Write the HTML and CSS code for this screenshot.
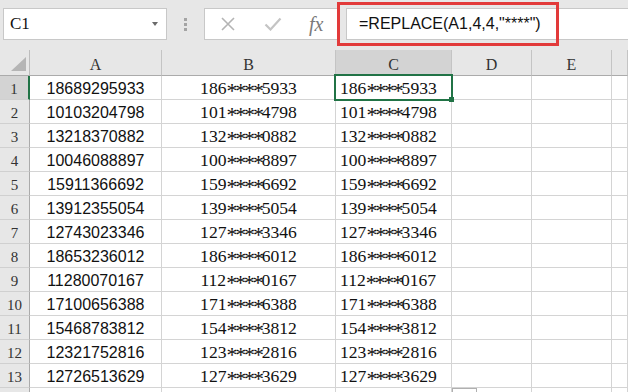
FILE: index.html
```html
<!DOCTYPE html>
<html lang="zh-CN">
<head>
    <meta charset="UTF-8">
    <title>REPLACE</title>
    <link rel="stylesheet" href="styles.css">
</head>
<body>
    <div class="formula-row">
        <div class="name-box">
            <span>C1</span>
            <span class="caret"></span>
        </div>
        <div class="grip"><i></i><i></i><i></i></div>
        <div class="fx-buttons">
            <svg class="btn-x" width="16" height="16" viewBox="0 0 16 16">
                <path d="M2 2 L14 14 M14 2 L2 14" stroke="#b4b4b4" stroke-width="1.6" fill="none"/>
            </svg>
            <svg class="btn-ok" width="18" height="14" viewBox="0 0 18 14">
                <path d="M1.5 7.5 L6.5 12.5 L16.5 1.5" stroke="#c4c4c4" stroke-width="2.2" fill="none"/>
            </svg>
            <span class="fx">fx</span>
        </div>
        <div class="formula-input">=REPLACE(A1,4,4,"****")</div>
        <!-- red mark drawn over the formula -->
        <div class="highlight"></div>
    </div>

    <div class="sheet">
        <div class="corner"><span class="tri"></span></div>
        <div class="col-head">A</div>
        <div class="col-head">B</div>
        <div class="col-head active">C</div>
        <div class="col-head">D</div>
        <div class="col-head">E</div>
        <div class="col-head"></div>

        <div class="row-head active">1</div>
        <div class="cell num">18689295933</div>
        <div class="cell mid">186<span class="mask">****</span>5933</div>
        <div class="cell left selected">186<span class="mask">****</span>5933<span class="sel"></span><span class="handle"></span></div>
        <div class="cell"></div><div class="cell"></div><div class="cell"></div>

        <div class="row-head">2</div>
        <div class="cell num">10103204798</div>
        <div class="cell mid">101<span class="mask">****</span>4798</div>
        <div class="cell left">101<span class="mask">****</span>4798</div>
        <div class="cell"></div><div class="cell"></div><div class="cell"></div>

        <div class="row-head">3</div>
        <div class="cell num">13218370882</div>
        <div class="cell mid">132<span class="mask">****</span>0882</div>
        <div class="cell left">132<span class="mask">****</span>0882</div>
        <div class="cell"></div><div class="cell"></div><div class="cell"></div>

        <div class="row-head">4</div>
        <div class="cell num">10046088897</div>
        <div class="cell mid">100<span class="mask">****</span>8897</div>
        <div class="cell left">100<span class="mask">****</span>8897</div>
        <div class="cell"></div><div class="cell"></div><div class="cell"></div>

        <div class="row-head">5</div>
        <div class="cell num">15911366692</div>
        <div class="cell mid">159<span class="mask">****</span>6692</div>
        <div class="cell left">159<span class="mask">****</span>6692</div>
        <div class="cell"></div><div class="cell"></div><div class="cell"></div>

        <div class="row-head">6</div>
        <div class="cell num">13912355054</div>
        <div class="cell mid">139<span class="mask">****</span>5054</div>
        <div class="cell left">139<span class="mask">****</span>5054</div>
        <div class="cell"></div><div class="cell"></div><div class="cell"></div>

        <div class="row-head">7</div>
        <div class="cell num">12743023346</div>
        <div class="cell mid">127<span class="mask">****</span>3346</div>
        <div class="cell left">127<span class="mask">****</span>3346</div>
        <div class="cell"></div><div class="cell"></div><div class="cell"></div>

        <div class="row-head">8</div>
        <div class="cell num">18653236012</div>
        <div class="cell mid">186<span class="mask">****</span>6012</div>
        <div class="cell left">186<span class="mask">****</span>6012</div>
        <div class="cell"></div><div class="cell"></div><div class="cell"></div>

        <div class="row-head">9</div>
        <div class="cell num">11280070167</div>
        <div class="cell mid">112<span class="mask">****</span>0167</div>
        <div class="cell left">112<span class="mask">****</span>0167</div>
        <div class="cell"></div><div class="cell"></div><div class="cell"></div>

        <div class="row-head">10</div>
        <div class="cell num">17100656388</div>
        <div class="cell mid">171<span class="mask">****</span>6388</div>
        <div class="cell left">171<span class="mask">****</span>6388</div>
        <div class="cell"></div><div class="cell"></div><div class="cell"></div>

        <div class="row-head">11</div>
        <div class="cell num">15468783812</div>
        <div class="cell mid">154<span class="mask">****</span>3812</div>
        <div class="cell left">154<span class="mask">****</span>3812</div>
        <div class="cell"></div><div class="cell"></div><div class="cell"></div>

        <div class="row-head">12</div>
        <div class="cell num">12321752816</div>
        <div class="cell mid">123<span class="mask">****</span>2816</div>
        <div class="cell left">123<span class="mask">****</span>2816</div>
        <div class="cell"></div><div class="cell"></div><div class="cell"></div>

        <div class="row-head">13</div>
        <div class="cell num">12726513629</div>
        <div class="cell mid">127<span class="mask">****</span>3629</div>
        <div class="cell left">127<span class="mask">****</span>3629</div>
        <div class="cell"></div><div class="cell"></div><div class="cell"></div>

        <!-- row 14, only its top edge is in view -->
        <div class="row-head"></div>
        <div class="cell"></div><div class="cell"></div><div class="cell"></div>
        <div class="cell"></div><div class="cell"></div><div class="cell"></div>
    </div>

    <!-- quick analysis button peeking in at the bottom -->
    <div class="quick-box"></div>
</body>
</html>
```

FILE: styles.css
```css
* {
    margin: 0;
    padding: 0;
    box-sizing: border-box;
}

body {
    width: 628px;
    height: 392px;
    overflow: hidden;
    position: relative;
    background: #fff;
    color: #111;
}

/* formula bar */
.formula-row {
    position: relative;
    height: 50px;
    display: flex;
    align-items: flex-start;
    padding: 8px 0 0 3px;
    background: #e7e7e7;
}

.name-box {
    width: 164px;
    height: 32px;
    display: flex;
    align-items: center;
    justify-content: space-between;
    padding: 0 8px 0 6px;
    background: #fff;
    border: 1px solid #c8c8c8;
    font-family: "Liberation Serif", serif;
    font-size: 17px;
}

.caret {
    width: 0;
    height: 0;
    border-left: 3px solid transparent;
    border-right: 3px solid transparent;
    border-top: 4px solid #6a6a6a;
}

.grip {
    width: 37px;
    height: 32px;
    display: flex;
    flex-direction: column;
    align-items: center;
    justify-content: center;
    gap: 2px;
}

.grip i {
    display: block;
    width: 3px;
    height: 3px;
    background: #a4a4a4;
}

.fx-buttons {
    width: 136px;
    height: 32px;
    display: flex;
    align-items: center;
    gap: 28px;
    padding-left: 15px;
    background: #fff;
    border: 1px solid #c8c8c8;
    border-right: none;
}

.fx {
    margin-left: -1px;
    font-family: "Liberation Serif", serif;
    font-style: italic;
    font-size: 20px;
    color: #7a7a7a;
}

.formula-input {
    flex: 1;
    height: 32px;
    margin-left: 6px;
    padding-left: 12px;
    background: #fff;
    border: 1px solid #c8c8c8;
    border-right: none;
    font-family: "Liberation Sans", Arial, sans-serif;
    font-size: 16px;
    line-height: 30px;
}

.highlight {
    position: absolute;
    left: 337px;
    top: 2px;
    width: 222px;
    height: 44px;
    border: 3px solid #e23a3a;
}

/* grid */
.sheet {
    display: grid;
    grid-template-columns: 30px 132px 174px 116px 80px 80px 1fr;
    grid-template-rows: 26px;
    grid-auto-rows: 24px;
}

.corner,
.col-head,
.row-head {
    background: #e7e7e7;
    font-family: "Liberation Serif", serif;
    color: #333;
    text-align: center;
}

.corner {
    position: relative;
    border-right: 1px solid #bdbdbd;
    border-bottom: 1px solid #ababab;
}

.tri {
    position: absolute;
    right: 3px;
    bottom: 4px;
    width: 0;
    height: 0;
    border-left: 15px solid transparent;
    border-bottom: 14px solid #b5b5b5;
}

.col-head {
    font-size: 16px;
    line-height: 20px;
    padding-top: 5px;
    border-right: 1px solid #c4c4c4;
    border-bottom: 1px solid #ababab;
}

.col-head.active {
    background: #d3d3d3;
    border-bottom: 2px solid #217346;
}

.row-head {
    font-size: 15px;
    line-height: 21px;
    padding-top: 3px;
    border-right: 1px solid #ababab;
    border-bottom: 1px solid #d0d0d0;
}

.row-head.active {
    background: #d3d3d3;
    border-right: 2px solid #217346;
}

.cell {
    line-height: 21px;
    padding-top: 2px;
    border-right: 1px solid #d4d4d4;
    border-bottom: 1px solid #d4d4d4;
    white-space: nowrap;
}

.num {
    font-family: "Liberation Sans", Arial, sans-serif;
    font-size: 16px;
    text-align: center;
}

.mid,
.left {
    font-family: "Liberation Serif", serif;
    font-size: 17.6px;
}

.mid {
    text-align: center;
}

.left {
    padding-left: 4px;
}

/* the masked digits sit lower and larger, like the CJK asterisk */
.mask {
    font-size: 22px;
    letter-spacing: -2.2px;
    vertical-align: -4px;
}

.selected {
    position: relative;
}

.sel {
    position: absolute;
    left: -2px;
    top: -2px;
    width: 119px;
    height: 27px;
    border: 2px solid #217346;
}

.handle {
    position: absolute;
    left: 113px;
    top: 21px;
    width: 5px;
    height: 5px;
    background: #217346;
}

.quick-box {
    position: absolute;
    left: 452px;
    top: 388px;
    width: 25px;
    height: 14px;
    background: #fff;
    border: 1px solid #b0b0b0;
}
```
